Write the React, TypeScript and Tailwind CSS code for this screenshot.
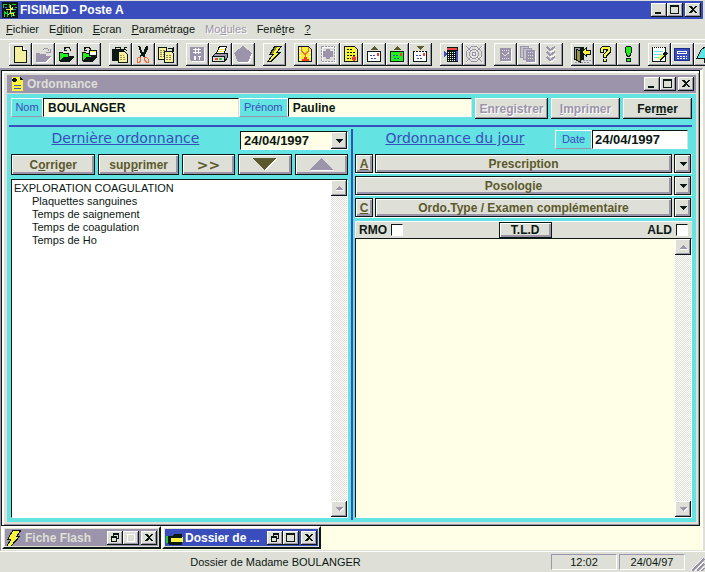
import type { ReactNode } from "react";

const RAISED =
  "bg-[#dedfd6] shadow-[inset_-1px_-1px_0_#0c1813,inset_1px_1px_0_#fff,inset_-2px_-2px_0_#9c94ab]";
const FRAMED =
  "border border-[#0c1813] bg-[#dedfd6] shadow-[inset_1px_1px_0_#fff,inset_-2px_-2px_0_#9c94ab]";
const EMBOSSED = "text-[#9c94ab] [text-shadow:1px_1px_0_#fff]";

function Icon({ children, size = 23 }: { children: ReactNode; size?: number }) {
  return (
    <svg
      width={size}
      height={size}
      viewBox={`0 0 ${size} ${size}`}
      shapeRendering="crispEdges"
      fill="none"
      aria-hidden="true"
      className="shrink-0"
    >
      {children}
    </svg>
  );
}

const K = "#0c1813";
const G = "#9c94ab";
const Y = "#f7f23e";
const P = "#f6efa0";
const B = "#3a4dbd";

function Bolt() {
  return (
    <>
      <path d="M11 3h8l-4 6h3L8 19H4l5-7H6z" fill={K} />
      <path d="M12 4h5l-4 6h3l-9 8H6l5-7H8z" fill={Y} />
      <path d="M12 4h2l-4 7H8z" fill="#8a8440" />
    </>
  );
}

const groups: { name: string; art: ReactNode }[][] = [
  [
    {
      name: "Nouveau",
      art: (
        <>
          <path d="M5.5 3.5h8l4 4v12h-12z" fill={P} stroke={K} />
          <path d="M13.5 3.5v4h4" fill="#fff" stroke={K} />
        </>
      ),
    },
    {
      name: "Ouvrir",
      art: (
        <>
          <path d="M5 11h3l1 1h6v2h5l-5 6H5z" fill="#fff" />
          <path d="M4 10h3l1 1h6v2h5l-5 6H4z" fill={G} />
          <path d="M10.5 7.5l2-2h3l2 3M14 9h4V6" stroke={G} />
        </>
      ),
    },
    {
      name: "Ouvrir un dossier",
      art: (
        <>
          <path d="M4.5 9.500h3l1 1h5v3h5l-4 4h-10z" fill="#22ee22" stroke={K} />
          <path d="M5 18l3-4h11l-4 5H5z" fill={K} />
          <path d="M9 6.500l2-2h3l2 3M9 4v3h3" stroke={K} />
        </>
      ),
    },
    {
      name: "Ouvrir une fiche",
      art: (
        <>
          <path d="M4.500 9.500h3l1 1h5v3h5l-4 4h-10z" fill="#22ee22" stroke={K} />
          <path d="M5 18l3-4h11l-4 5H5z" fill={K} />
          <path d="M11.500 7.500h7v5h-7z" fill="#fff" stroke={K} />
          <path d="M12 8h6v1h-6z" fill={Y} />
          <path d="M6 6.500l2-2h3l2 2M6 4v3h3" stroke={K} />
        </>
      ),
    },
  ],
  [
    {
      name: "Coller",
      art: (
        <>
          <path d="M3 6h3V4h6v2h3v12H3z" fill={K} />
          <path d="M7 5h4v1H7z" fill="#dedfd6" />
          <path d="M9.500 8.500h6l3 3v8h-9z" fill={P} stroke={K} />
          <path d="M11 12h4M11 14h6M11 16h6" stroke="#a39640" strokeDasharray="2 1" />
          <path d="M15 4.500h3M15.500 4v3M16 6l2 2" stroke={K} />
        </>
      ),
    },
    {
      name: "Couper",
      art: (
        <>
          <path d="M6 3h2l3 7 3-7h2v3l-3 6v2h-2l-1-2h0l-1 2H8v-2l1-1z" fill={K} />
          <path d="M5.500 15.500l2-1.500h1v4l-1 1h-2zM12.500 14.500h2l2 2v2.500h-2l-2-2z" stroke="#f0683c" />
        </>
      ),
    },
    {
      name: "Copier",
      art: (
        <>
          <path d="M3.500 4.500h8v12h-8z" fill={P} stroke={K} />
          <path d="M5 7h5M5 9h5M5 11h5M5 13h5" stroke="#8a8440" strokeDasharray="2 1" />
          <path d="M9.500 8.500h7l2 2v9h-9z" fill={P} stroke={K} />
          <path d="M11 12h5M11 14h6M11 16h6" stroke="#8a8440" strokeDasharray="2 1" />
          <path d="M13 5.500h4v2M18.500 4v4h-4" stroke={K} />
        </>
      ),
    },
  ],
  [
    {
      name: "Sauver",
      art: (
        <>
          <path d="M5 5h14v14H6l-1-1z" fill="#fff" />
          <path d="M4 4h14v14H5l-1-1z" fill={G} />
          <path d="M7 6.500h8M7 9.500h8M9.500 5v6M12.500 5v6" stroke="#fff" />
          <path d="M8 13h2v4H8zM12 13h3v1h-1v3h-1v-3h-1z" fill="#fff" />
        </>
      ),
    },
    {
      name: "Imprimer la page",
      art: (
        <>
          <path d="M10.500 3.500h7l-3 9h-8z" fill="#fff" stroke={K} />
          <path d="M10 6h6M9 8h6M8 10h6" stroke={Y} />
          <path d="M3.500 13.500l3-3h12v4l-3 4h-12z" fill={G} stroke={K} />
          <path d="M4 14h12v4H4z" fill="#dedfd6" />
          <path d="M3 13.500h13M3 18.500h13M15.500 14v4" stroke={K} />
          <path d="M6 15h3v2H6z" fill="#f04040" />
          <path d="M10 15h3v2h-3z" fill="#22cc44" />
        </>
      ),
    },
    {
      name: "Forme",
      art: (
        <>
          <path d="M12 4l9 7-3 9H6L4 11z" fill="#fff" />
          <path d="M11 3l9 7-4 9H6L2 10z" fill={G} />
        </>
      ),
    },
  ],
  [{ name: "Flash", art: <Bolt /> }],
  [
    {
      name: "Ordonnance du patient",
      art: (
        <>
          <path d="M4.500 3.500h10l3 3v12h-13z" fill={Y} stroke={K} />
          <path d="M5 5h2M5 8h2M5 12h2M15 9h2M15 13h2M5 16h2" stroke="#fff" />
          <path d="M7.500 4v4l3 3h1l3-3V4M11.500 11v4" stroke="#f0683c" />
          <path d="M8 16h7v2H8zM10 14h3v2h-3z" fill="#f03c28" />
        </>
      ),
    },
    {
      name: "Certificat",
      art: (
        <>
          <path d="M5.500 4.500h13v15h-13z" stroke="#fff" />
          <path d="M4.500 3.500h13v15h-13z" stroke={G} strokeDasharray="2 1" />
          <path d="M9 6h4v2h3v6h-3v2H9v-2H6V8h3z" fill={G} />
        </>
      ),
    },
    {
      name: "Courrier",
      art: (
        <>
          <path d="M4.500 3.500h10l3 3v12h-13z" fill={Y} stroke={K} />
          <path d="M7 6.500h6M7 9.500h9M7 12.500h9M7 15.500h4" stroke={K} strokeDasharray="2 1" />
          <path d="M13 13h2v1h1v3h-1v1h-2v-1h-1v-3h1z" fill="#f03c3c" />
        </>
      ),
    },
    {
      name: "Boite d'envoi",
      art: (
        <>
          <path d="M11 3l4 4H7z" fill="#5c5a2c" />
          <path d="M4.500 8.500h13v10h-13z" fill="#fff" stroke={K} />
          <path d="M14 10h2v3h-2z" fill="#f03c3c" />
          <path d="M7 12.500h6M8 15.500h5" stroke={B} strokeDasharray="2 1" />
        </>
      ),
    },
    {
      name: "Boite verte",
      art: (
        <>
          <path d="M11 3l4 4H7z" fill="#5c5a2c" />
          <path d="M4.500 8.500h13v10h-13z" fill="#22ee22" stroke={K} />
          <path d="M14 10h2v3h-2z" fill="#f03c3c" />
          <path d="M7 12.500h6M8 15.500h5" stroke={B} strokeDasharray="2 1" />
        </>
      ),
    },
    {
      name: "Boite de réception",
      art: (
        <>
          <path d="M4.500 8.500h13v10h-13z" fill="#fff" stroke={K} />
          <path d="M6 8.500h10" stroke="#fff" strokeDasharray="1 2" />
          <path d="M8 3h7l-3 4h-1z" fill="#5c5a2c" />
          <path d="M14 10h2v3h-2z" fill="#f03c3c" />
          <path d="M7 12.500h6M8 15.500h5" stroke={B} strokeDasharray="2 1" />
        </>
      ),
    },
  ],
  [
    {
      name: "Agenda",
      art: (
        <>
          <path d="M7 4h11v15H7z" fill={K} />
          <path d="M7 5h10v2H7z" fill="#f04848" />
          <path d="M8 9.500h8M8 11.500h8M8 13.500h8M8 15.500h8M8 17.500h8" stroke="#fff" strokeDasharray="1 1" />
          <path d="M16 8h2v10h-2zM4 8l3 3-3 4z" fill={B} />
        </>
      ),
    },
    {
      name: "Cible",
      art: (
        <g stroke={G}>
          <path d="M3 3l17 17M20 3L3 20" stroke="#fff" />
          <path d="M3 3l4 4M19 3l-4 4M3 19l4-4M19 19l-4-4" />
          <circle cx="11" cy="11" r="7.500" />
          <circle cx="11" cy="11" r="4.500" />
          <circle cx="11" cy="11" r="2" />
        </g>
      ),
    },
  ],
  [
    {
      name: "Fiche",
      art: (
        <>
          <path d="M7 6h11v13H7z" fill="#fff" />
          <path d="M6 5h11v13H6z" fill={G} />
          <path d="M8 7.500h7M8 15.500h7M8 10.500h1M14 10.500h1" stroke="#dedfd6" strokeDasharray="1 1" />
          <path d="M9 11l2 2 4-4" stroke="#dedfd6" />
        </>
      ),
    },
    {
      name: "Fiches",
      art: (
        <>
          <path d="M4 4h9v11H4z" fill="#fff" />
          <path d="M3.500 3.500h8v11h-8z" fill="#c6c2c9" stroke={G} />
          <path d="M6.500 5.500h8v11h-8z" fill="#c6c2c9" stroke={G} />
          <path d="M10 8h9v12h-9z" fill="#fff" />
          <path d="M9 7h9v12H9z" fill={G} />
          <path d="M11 9.500h5M11 12.500h5M11 15.500h5" stroke="#dedfd6" strokeDasharray="1 1" />
        </>
      ),
    },
    {
      name: "Valider",
      art: (
        <>
          <path d="M8 6l3 3 5-3M8 11l3 3 5-3M8 16l3 3 5-3" stroke="#fff" />
          <path d="M7 4l3 3 5-3M7 9l3 3 5-3M7 14l3 3 5-3" stroke={G} strokeWidth="2" />
        </>
      ),
    },
  ],
  [
    {
      name: "Quitter",
      art: (
        <>
          <path d="M6 17h14M4 19h15" stroke={G} strokeDasharray="2 1" />
          <path d="M3 4h10v13h-3V6H3z" fill={K} />
          <path d="M3.500 4.500h6v12h-6z" fill={G} stroke={K} />
          <path d="M5 6l4 2v11l-4-2z" fill="#9a9440" stroke={K} />
          <path d="M11 9l4-4v2h4v4h-4v2z" fill={Y} stroke={K} />
        </>
      ),
    },
    {
      name: "Aide",
      art: (
        <>
          <path d="M8 3h7l2 2v5l-4 3v2H9v-4l3-3V7H10v3H6V5z" fill={K} />
          <path d="M8 4h7l1 1v4l-4 3v2h-2v-3l4-3V6H9v3H7V5z" fill={Y} />
          <path d="M9 16h4v3H9z" fill={K} />
          <path d="M10 16h2v2h-2z" fill={Y} />
        </>
      ),
    },
    {
      name: "Alerte",
      art: (
        <>
          <path d="M9 3h5v1h1v5l-2 5h-3L8 9V4h1zM9 15h5v4H9z" fill={K} />
          <path d="M9 4h5v5l-2 4h-1L9 9zM10 16h3v2h-3z" fill="#22ee22" />
        </>
      ),
    },
  ],
  [
    {
      name: "Notes",
      art: (
        <>
          <path d="M4.500 4.500h13v14h-13z" fill="#fff" stroke={K} />
          <path d="M5 4.500h12" stroke="#fff" strokeDasharray="1 1" />
          <path d="M6 8.500h9M6 11.500h9M6 14.500h9" stroke="#5fe3e1" />
          <path d="M17 8l3 2-5 6-3 2 1-4z" fill={K} />
          <path d="M10 15l5-4 1 2-5 4z" fill={Y} />
        </>
      ),
    },
    {
      name: "Calculatrice",
      art: (
        <>
          <path d="M3.500 5.500h15v12h-15z" fill={B} stroke="#1c2c8c" />
          <path d="M6.500 8.500h9v2h-9z" stroke="#fff" fill={B} />
          <path d="M6 13h10M6 15h10" stroke="#fff" strokeDasharray="2 1" />
        </>
      ),
    },
    {
      name: "Sonnette",
      art: (
        <>
          <path d="M11 4l4 3 2 8H3l4-8z" fill="#5fe3e1" stroke={K} />
          <path d="M10 15h3v4h-3z" fill="#fff" stroke={K} />
        </>
      ),
    },
  ],
];

const menus: [string, string, string, boolean?][] = [
  ["", "F", "ichier"],
  ["E", "d", "ition"],
  ["", "E", "cran"],
  ["", "P", "aramétrage"],
  ["Mo", "d", "ules", true],
  ["Fenê", "t", "re"],
  ["", "?", ""],
];

function WindowButton({ kind, small }: { kind: "min" | "max" | "restore" | "dim" | "close"; small?: boolean }) {
  return (
    <button
      type="button"
      aria-label={kind}
      className={`flex h-3.5 w-4 shrink-0 items-center justify-center ${RAISED} ${
        kind === "close" && !small ? "ml-0.5" : ""
      }`}
    >
      <Icon size={14}>
        {kind === "min" && <path d="M3 9h6v2H3z" fill={K} />}
        {kind === "max" && <path d="M2.500 3v7.500h8V3M2 3h9" stroke={K} />}
        {kind === "max" && <path d="M2 2h9v2H2z" fill={K} />}
        {kind === "dim" && <path d="M3 3h7v7H3z" stroke="#fff" />}
        {kind === "restore" && (
          <>
            <path d="M5.500 5v-1.500h5v4h-2" stroke={K} />
            <path d="M5 2h6v2H5zM3 5h6v2H3z" fill={K} />
            <path d="M3.500 6v4.500h5V6" stroke={K} />
          </>
        )}
        {kind === "close" && (
          <path d="M3 3h2l2 2 2-2h2v1L8 6.500 11 9v1H9L7 8l-2 2H3V9l3-2.500L3 4z" fill={K} />
        )}
      </Icon>
    </button>
  );
}

function ScrollButton({ down }: { down?: boolean }) {
  return (
    <button
      type="button"
      aria-label={down ? "Défiler vers le bas" : "Défiler vers le haut"}
      className={`flex size-4 items-center justify-center ${RAISED}`}
    >
      <Icon size={10}>
        {down ? (
          <>
            <path d="M2 4h8L6 8z" fill="#fff" />
            <path d="M1 3h8L5 7z" fill={G} />
          </>
        ) : (
          <>
            <path d="M2 7h8v1H2z" fill="#fff" />
            <path d="M1 7h8L5 3z" fill={G} />
          </>
        )}
      </Icon>
    </button>
  );
}

function ScrollBar() {
  return (
    <div className="flex w-4 shrink-0 flex-col justify-between bg-[repeating-conic-gradient(#dedfd6_0_25%,#fff_0_50%)] bg-size-[2px_2px]">
      <ScrollButton />
      <ScrollButton down />
    </div>
  );
}

function DownArrow() {
  return (
    <Icon size={8}>
      <path d="M0 2h8L4 6z" fill={K} />
    </Icon>
  );
}

function ComboRow({ letter, text }: { letter?: string; text: string }) {
  return (
    <div className="flex h-5 gap-0.5 border-b border-white bg-[#dedfd6] pr-px text-[#5c5a2c]">
      {letter && (
        <button type="button" className={`w-[18px] shrink-0 text-xs leading-4 font-bold underline ${FRAMED}`}>
          {letter}
        </button>
      )}
      <button type="button" className={`min-w-0 flex-1 truncate text-xs leading-4 font-bold ${FRAMED}`}>
        {text}
      </button>
      <button
        type="button"
        aria-label={`Choisir ${text}`}
        className={`flex w-[17px] shrink-0 items-center justify-center ${FRAMED}`}
      >
        <DownArrow />
      </button>
    </div>
  );
}

function TopButton({
  before,
  hot,
  after,
  disabled,
  wide,
}: {
  before: string;
  hot: string;
  after: string;
  disabled?: boolean;
  wide: string;
}) {
  return (
    <button
      type="button"
      disabled={disabled}
      className={`h-[21px] shrink-0 text-xs font-bold ${wide} ${RAISED} ${disabled ? EMBOSSED : ""}`}
    >
      {before}
      <span className="underline">{hot}</span>
      {after}
    </button>
  );
}

function ActionButton({ children, wide, label }: { children: ReactNode; wide: string; label?: string }) {
  return (
    <button
      type="button"
      aria-label={label}
      className={`flex h-[21px] items-center justify-center text-xs font-bold text-[#5c5a2c] ${wide} ${FRAMED}`}
    >
      {children}
    </button>
  );
}

const LABEL =
  "flex h-[19px] shrink-0 items-center justify-center border border-white border-b-[#9c94ab] text-[11px] text-[#3a4dbd]";
const FIELD =
  "h-[19px] min-w-0 border border-t-[#0c1813] border-l-[#0c1813] border-r-[#dedfd6] border-b-white px-1 text-xs font-bold outline-none";

const exams = ["Plaquettes sanguines", "Temps de saignement", "Temps de coagulation", "Temps de Ho"];

function TaskItem({ title, active, art }: { title: string; active?: boolean; art: ReactNode }) {
  return (
    <div
      className={`flex h-[23px] w-[159px] items-center border-2 border-t-white border-l-white border-r-[#0c1813] border-b-[#0c1813] px-0.5 outline-1 -outline-offset-3 outline-[#dedfd6] ${
        active ? "bg-[#3a4dbd] text-white" : "bg-[#9c94ab] text-[#dedfd6]"
      }`}
    >
      <Icon size={18}>{art}</Icon>
      <span className="min-w-0 flex-1 truncate pl-px text-xs font-bold">{title}</span>
      <WindowButton kind="restore" small />
      <WindowButton kind={active ? "max" : "dim"} small />
      <div className="ml-0.5 flex">
        <WindowButton kind="close" small />
      </div>
    </div>
  );
}

export default function App() {
  return (
    <div className="flex min-h-screen w-full flex-col overflow-hidden bg-[#dedfd6] pt-px font-['Liberation_Sans',Arial,sans-serif] text-[#0c1813]">
      <header className="mr-0.5 flex h-[18px] items-center bg-[#3a4dbd] pr-0.5 pl-0.5 text-white">
        <Icon size={16}>
          <path d="M0 0h16v16H0z" fill={K} />
          <path d="M1 2h4M1.500 2v4M7 2v4M10 2.500h4M13 5h2M2 9v6M5 9v6M2 10l3 2M9 10h4M9 13h4M9.500 10v5" stroke="#22cc33" />
          <path d="M4 7.500h7M8.500 3v9M11 5l-2 3M6 13l2-2h3v3" stroke={Y} />
          <path d="M11 7h3M3 5h2" stroke="#4a7cf0" />
        </Icon>
        <h1 className="ml-0.5 flex-1 text-xs font-bold">FISIMED - Poste A</h1>
        <WindowButton kind="min" />
        <WindowButton kind="max" />
        <WindowButton kind="close" />
      </header>

      <nav className="flex h-5 items-center gap-2.5 pl-1.5 text-[11px]">
        {menus.map(([before, hot, after, off]) => (
          <button key={before + hot + after} type="button" disabled={off} className={off ? EMBOSSED : ""}>
            {before}
            <span className="underline">{hot}</span>
            {after}
          </button>
        ))}
      </nav>

      <div className="flex h-[29px] gap-2 overflow-hidden border-t border-white pt-[3px] pl-[9px]">
        {groups.map((group) => (
          <div key={group[0].name} className="flex shrink-0">
            {group.map((tool) => (
              <button key={tool.name} type="button" aria-label={tool.name} className={`size-[23px] shrink-0 ${RAISED}`}>
                <Icon>{tool.art}</Icon>
              </button>
            ))}
          </div>
        ))}
      </div>

      <main className="mr-0.5 flex flex-1 flex-col border-t-2 border-r border-b border-l border-t-[#9c94ab] border-r-white border-b-[#dedfd6] border-l-[#9c94ab] bg-[#ffffe7]">
        <section className="mr-0.5 flex flex-1 flex-col border border-[#0c1813] bg-[#dedfd6] pt-1 pr-[3px] pb-[3px] pl-[5px] shadow-[inset_2px_2px_0_#fff,inset_-1px_-1px_0_#9c94ab]">
          <div className="flex h-[18px] items-center bg-[#9c94ab] pr-0.5 pl-1 text-[#dedfd6]">
            <Icon size={14}>
              <path d="M1 0h8l3 3v11H1z" fill={Y} />
              <path d="M9 0l3 3H9zM1 2h5v2H1zM2 1h3v4H2z" fill={K} />
              <path d="M3 8.500h7M3 11.500h7" stroke={B} />
            </Icon>
            <h2 className="ml-0.5 flex-1 text-xs font-bold">Ordonnance</h2>
            <WindowButton kind="min" />
            <WindowButton kind="max" />
            <WindowButton kind="close" />
          </div>

          <div className="mt-px flex flex-1 flex-col bg-[#63e3e1] pt-1 pr-1 pb-0.5 pl-0.5">
            <div className="flex gap-[3px] pl-0.5">
              <div className="flex min-w-0 flex-1">
                <label htmlFor="nom" className={`${LABEL} w-8`}>
                  Nom
                </label>
                <input id="nom" defaultValue="BOULANGER" className={`${FIELD} w-0 flex-[196] bg-[#ffffe7]`} />
                <label htmlFor="prenom" className={`${LABEL} w-[49px]`}>
                  Prénom
                </label>
                <input id="prenom" defaultValue="Pauline" className={`${FIELD} w-0 flex-[184] bg-[#ffffe7]`} />
              </div>
              <TopButton before="Enre" hot="g" after="istrer" disabled wide="w-[73px]" />
              <TopButton before="" hot="I" after="mprimer" disabled wide="w-[69px]" />
              <TopButton before="Fer" hot="m" after="er" wide="w-[69px]" />
            </div>

            <div className="mt-1.5 h-0.5 bg-[#3a4dbd]" />

            <div className="mt-0.5 flex flex-1 pl-0.5">
              <section className="flex min-w-0 flex-1 flex-col pb-0.5">
                <div className="flex h-[25px] items-start pt-px">
                  <h3 className="flex-1 text-center font-['DejaVu_Sans',sans-serif] text-sm leading-4 text-[#3a4dbd] underline">
                    Dernière ordonnance
                  </h3>
                  <div className="relative mt-px h-[19px] w-[108px]">
                    <select
                      aria-label="Date de la dernière ordonnance"
                      className="block h-full w-full appearance-none border border-t-[#0c1813] border-l-[#0c1813] border-r-white border-b-white bg-[#ffffe7] pl-[3px] text-[13px] leading-4 font-bold outline-none"
                    >
                      <option>24/04/1997</option>
                    </select>
                    <span
                      className={`pointer-events-none absolute top-px right-px flex h-[17px] w-4 items-center justify-center ${RAISED}`}
                    >
                      <DownArrow />
                    </span>
                  </div>
                </div>
                <div className="flex gap-[3px]">
                  <ActionButton wide="flex-[85]">
                    <span>
                      C<span className="underline">o</span>rriger
                    </span>
                  </ActionButton>
                  <ActionButton wide="flex-[81]">
                    <span>
                      sup<span className="underline">p</span>rimer
                    </span>
                  </ActionButton>
                  <ActionButton wide="flex-[53]">
                    <span className="font-['DejaVu_Sans',sans-serif] text-sm leading-4">&gt;&gt;</span>
                  </ActionButton>
                  <ActionButton wide="flex-[53]" label="Suivante">
                    <Icon size={25}>
                      <path d="M1 7h24L13 19z" fill="#fff" />
                      <path d="M0 6h24L12 18z" fill="#5c5a2c" />
                    </Icon>
                  </ActionButton>
                  <ActionButton wide="flex-[53]" label="Précédente">
                    <Icon size={25}>
                      <path d="M1 19h24L13 7z" fill="#fff" />
                      <path d="M0 18h24L12 6z" fill={G} />
                    </Icon>
                  </ActionButton>
                </div>
                <div className="mt-1 flex flex-1 border border-t-[#0c1813] border-l-[#0c1813] border-r-white border-b-white bg-white">
                  <div className="flex-1 pt-0.5 pl-0.5 text-[11px] leading-[13px]">
                    <p>EXPLORATION COAGULATION</p>
                    <ul className="pl-[18px]">
                      {exams.map((exam) => (
                        <li key={exam}>{exam}</li>
                      ))}
                    </ul>
                  </div>
                  <ScrollBar />
                </div>
              </section>

              <div className="mr-0.5 ml-[3px] w-0.5 bg-[#3a4dbd]" />

              <section className="flex min-w-0 flex-1 flex-col pb-0.5">
                <div className="flex h-[25px] items-start pt-px pr-1">
                  <h3 className="flex-1 text-center font-['DejaVu_Sans',sans-serif] text-sm leading-4 text-[#3a4dbd] underline">
                    Ordonnance du jour
                  </h3>
                  <label htmlFor="date" className={`${LABEL} w-[37px]`}>
                    Date
                  </label>
                  <input
                    id="date"
                    defaultValue="24/04/1997"
                    className="h-[19px] w-24 border border-t-[#0c1813] border-l-[#0c1813] border-r-[#dedfd6] border-b-white bg-white pl-0.5 text-[13px] font-bold outline-none"
                  />
                </div>
                <div className="flex flex-col gap-0.5">
                  <ComboRow letter="A" text="Prescription" />
                  <ComboRow text="Posologie" />
                  <ComboRow letter="C" text="Ordo.Type / Examen complémentaire" />
                </div>
                <div className="mt-[3px] flex h-[17px] items-center justify-between border-t border-l border-white bg-[#dedfd6] pl-[3px] text-xs font-bold">
                  <label className="flex items-center gap-1">
                    RMO
                    <input
                      type="checkbox"
                      className="size-3 appearance-none border border-t-[#0c1813] border-l-[#0c1813] border-r-white border-b-white bg-white"
                    />
                  </label>
                  <button type="button" className={`h-4 w-[53px] leading-3 ${FRAMED}`}>
                    T.L.D
                  </button>
                  <label className="flex items-center gap-1 pr-1">
                    ALD
                    <input
                      type="checkbox"
                      className="size-3 appearance-none border border-t-[#0c1813] border-l-[#0c1813] border-r-white border-b-white bg-white"
                    />
                  </label>
                </div>
                <div className="flex flex-1 border border-t-[#0c1813] border-l-[#0c1813] border-r-white border-b-white bg-[#ffffe7]">
                  <textarea
                    aria-label="Ordonnance du jour"
                    className="min-w-0 flex-1 resize-none p-0.5 text-[11px] leading-[13px] outline-none"
                  />
                  <ScrollBar />
                </div>
              </section>
            </div>
          </div>
        </section>

        <div className="flex h-6 gap-px pl-px">
          <TaskItem
            title="Fiche Flash"
            art={<path d="M7 1h8l-4 6h3L5 17H1l4-7H2z" fill={Y} stroke={K} />}
          />
          <TaskItem
            title="Dossier de ..."
            active
            art={
              <>
                <path d="M2 7h4l2-2h8v10H2z" fill={K} />
                <path d="M0 7h2v7H0z" fill="#22cc33" />
                <path d="M5 9h10l2-2v6H5z" fill={Y} />
                <path d="M3 14h13v2H3z" fill={K} />
              </>
            }
          />
        </div>
      </main>

      <footer className="flex h-[21px] items-center border-t border-white text-[11px]">
        <p className="flex-1 text-center">Dossier de Madame BOULANGER</p>
        <div className="flex gap-0.5">
          <p className="h-4 w-[66px] border border-t-[#9c94ab] border-l-[#9c94ab] border-r-white border-b-white text-center leading-[15px]">
            12:02
          </p>
          <p className="h-4 w-[66px] border border-t-[#9c94ab] border-l-[#9c94ab] border-r-white border-b-white text-center leading-[15px]">
            24/04/97
          </p>
        </div>
        <div className="ml-1.5 self-end">
          <Icon size={14}>
            <path d="M1 13L13 1M6 13l7-7M10 13l3-3" stroke={G} strokeWidth="2" />
            <path d="M0 12L12 0M4 13l9-9M9 13l4-4" stroke="#fff" />
          </Icon>
        </div>
      </footer>
    </div>
  );
}
